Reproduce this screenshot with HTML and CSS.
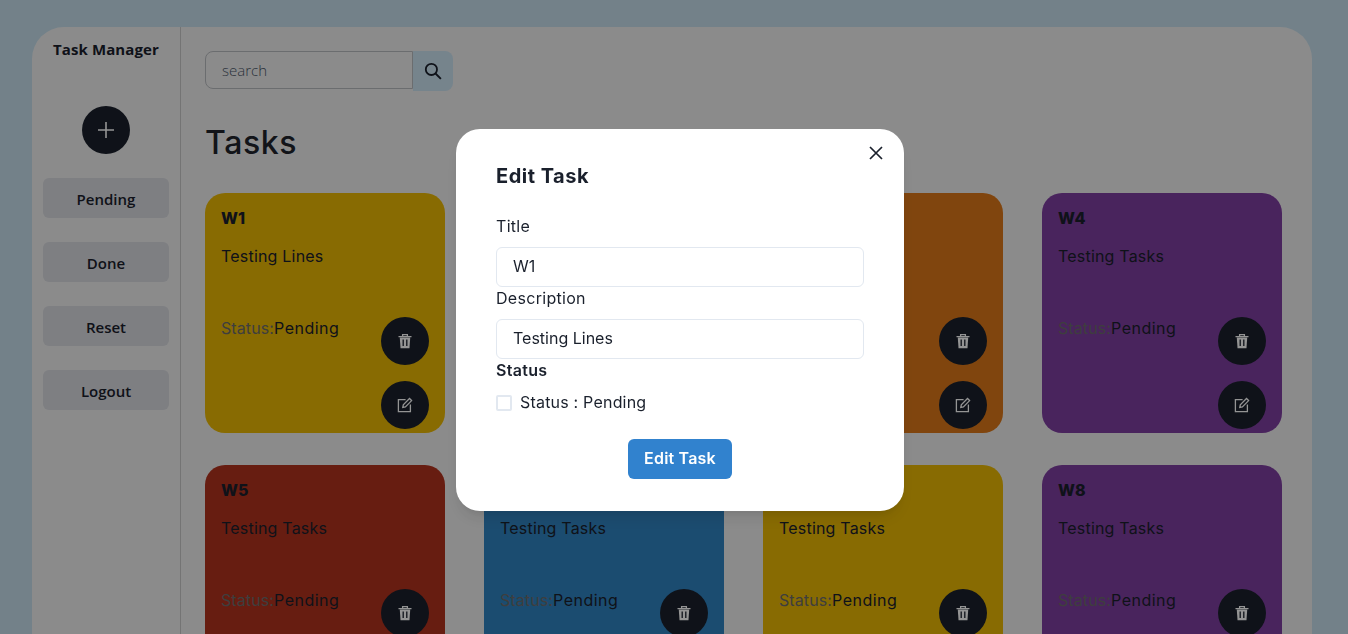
FILE: index.html
```html
<!DOCTYPE html>
<html lang="en">
<head>
    <meta charset="UTF-8">
    <meta name="viewport" content="width=device-width, initial-scale=1.0">
    <title>Task Manager</title>
    <link rel="stylesheet" href="styles.css">
</head>
<body>
    <svg class="sprite" aria-hidden="true">
        <symbol id="trash" viewBox="0 0 16 16">
            <path d="M1.5 3.6h13M5.6 3.4V1.6h4.8v1.8" fill="none" stroke="currentColor" stroke-width="1.3"/>
            <path d="M2.8 4.6h10.4l-.7 10.6H3.5z" fill="currentColor"/>
            <path d="M6.2 6.6v6.4M9.8 6.6v6.4" fill="none" stroke="#1a202c" stroke-width="1.3"/>
        </symbol>
        <symbol id="edit" viewBox="0 0 16 16">
            <path d="M8.6 2.6H1.4v12h12V7.4" fill="none" stroke="currentColor" stroke-width="1.3"/>
            <path d="M5.8 10.4l.5-2.6 6.2-6.3 2.1 2.1-6.2 6.3z" fill="none" stroke="currentColor" stroke-width="1.3"/>
        </symbol>
    </svg>

    <div class="panel">
        <aside class="sidebar">
            <h2 class="brand">Task Manager</h2>
            <button class="add-btn" aria-label="Add task">
                <svg width="18" height="18" viewBox="0 0 18 18"><path d="M9 1v16M1 9h16" stroke="currentColor" stroke-width="1.6"/></svg>
            </button>
            <button class="side-btn">Pending</button>
            <button class="side-btn">Done</button>
            <button class="side-btn">Reset</button>
            <button class="side-btn">Logout</button>
        </aside>

        <main class="content">
            <div class="search">
                <input class="search-input" type="text" placeholder="search">
                <button class="search-btn" aria-label="Search">
                    <svg width="18" height="18" viewBox="0 0 18 18"><circle cx="7.4" cy="7.4" r="5.6" fill="none" stroke="currentColor" stroke-width="1.8"/><path d="M11.5 11.5l5.4 5.4" stroke="currentColor" stroke-width="1.9"/></svg>
                </button>
            </div>

            <h1 class="page-title">Tasks</h1>

            <div class="grid">
                <div class="card yellow">
                    <h3 class="card-title">W1</h3>
                    <p class="card-desc">Testing Lines</p>
                    <div class="card-foot">
                        <p class="card-status"><span class="status-key">Status:</span>Pending</p>
                        <div class="card-actions">
                            <button class="round-btn"><svg width="16" height="16"><use href="#trash"/></svg></button>
                            <button class="round-btn"><svg width="16" height="16"><use href="#edit"/></svg></button>
                        </div>
                    </div>
                </div>
                <div class="card blue">
                    <h3 class="card-title">W2</h3>
                    <p class="card-desc">Testing Tasks</p>
                    <div class="card-foot">
                        <p class="card-status"><span class="status-key">Status:</span>Pending</p>
                        <div class="card-actions">
                            <button class="round-btn"><svg width="16" height="16"><use href="#trash"/></svg></button>
                            <button class="round-btn"><svg width="16" height="16"><use href="#edit"/></svg></button>
                        </div>
                    </div>
                </div>
                <div class="card orange">
                    <h3 class="card-title">W3</h3>
                    <p class="card-desc">Testing Tasks</p>
                    <div class="card-foot">
                        <p class="card-status"><span class="status-key">Status:</span>Pending</p>
                        <div class="card-actions">
                            <button class="round-btn"><svg width="16" height="16"><use href="#trash"/></svg></button>
                            <button class="round-btn"><svg width="16" height="16"><use href="#edit"/></svg></button>
                        </div>
                    </div>
                </div>
                <div class="card purple">
                    <h3 class="card-title">W4</h3>
                    <p class="card-desc">Testing Tasks</p>
                    <div class="card-foot">
                        <p class="card-status"><span class="status-key">Status:</span>Pending</p>
                        <div class="card-actions">
                            <button class="round-btn"><svg width="16" height="16"><use href="#trash"/></svg></button>
                            <button class="round-btn"><svg width="16" height="16"><use href="#edit"/></svg></button>
                        </div>
                    </div>
                </div>
                <div class="card red">
                    <h3 class="card-title">W5</h3>
                    <p class="card-desc">Testing Tasks</p>
                    <div class="card-foot">
                        <p class="card-status"><span class="status-key">Status:</span>Pending</p>
                        <div class="card-actions">
                            <button class="round-btn"><svg width="16" height="16"><use href="#trash"/></svg></button>
                            <button class="round-btn"><svg width="16" height="16"><use href="#edit"/></svg></button>
                        </div>
                    </div>
                </div>
                <div class="card blue">
                    <h3 class="card-title">W6</h3>
                    <p class="card-desc">Testing Tasks</p>
                    <div class="card-foot">
                        <p class="card-status"><span class="status-key">Status:</span>Pending</p>
                        <div class="card-actions">
                            <button class="round-btn"><svg width="16" height="16"><use href="#trash"/></svg></button>
                            <button class="round-btn"><svg width="16" height="16"><use href="#edit"/></svg></button>
                        </div>
                    </div>
                </div>
                <div class="card yellow">
                    <h3 class="card-title">W7</h3>
                    <p class="card-desc">Testing Tasks</p>
                    <div class="card-foot">
                        <p class="card-status"><span class="status-key">Status:</span>Pending</p>
                        <div class="card-actions">
                            <button class="round-btn"><svg width="16" height="16"><use href="#trash"/></svg></button>
                            <button class="round-btn"><svg width="16" height="16"><use href="#edit"/></svg></button>
                        </div>
                    </div>
                </div>
                <div class="card purple">
                    <h3 class="card-title">W8</h3>
                    <p class="card-desc">Testing Tasks</p>
                    <div class="card-foot">
                        <p class="card-status"><span class="status-key">Status:</span>Pending</p>
                        <div class="card-actions">
                            <button class="round-btn"><svg width="16" height="16"><use href="#trash"/></svg></button>
                            <button class="round-btn"><svg width="16" height="16"><use href="#edit"/></svg></button>
                        </div>
                    </div>
                </div>
            </div>
        </main>
    </div>

    <div class="backdrop">
        <form class="modal">
            <button class="close-btn" type="button" aria-label="Close">
                <svg width="14" height="14" viewBox="0 0 14 14"><path d="M1 1l12 12M13 1L1 13" stroke="currentColor" stroke-width="1.7"/></svg>
            </button>
            <h2 class="modal-title">Edit Task</h2>
            <label class="field-label" for="title">Title</label>
            <input class="field-input" id="title" type="text" value="W1">
            <label class="field-label" for="desc">Description</label>
            <input class="field-input" id="desc" type="text" value="Testing Lines">
            <p class="field-label field-strong">Status</p>
            <label class="check-row">
                <input class="check-box" type="checkbox">
                <span class="check-text">Status : Pending</span>
            </label>
            <button class="submit-btn" type="button">Edit Task</button>
        </form>
    </div>
</body>
</html>
```

FILE: styles.css
```css
* {
    box-sizing: border-box;
}
html, body {
    height: 100%;
}
body {
    margin: 0;
    overflow: hidden;
    padding: 27px 36px 0 32px;
    background-color: #c6dfec;
    color: #1a202c;
    font-family: Inter, sans-serif;
}
button {
    border: none;
    font-family: inherit;
    cursor: pointer;
}
h1, h2, h3, p {
    margin: 0;
}
.sprite {
    display: none;
}
.panel {
    display: flex;
    height: 760px;
    background-color: #f0f0f0;
    border-radius: 32px 32px 0 0;
}
.sidebar {
    flex: 0 0 149px;
    display: flex;
    flex-direction: column;
    align-items: center;
    border-right: 1px solid #c8c8c8;
    font-family: "Open Sans", sans-serif;
}
.brand {
    margin-top: 11px;
    font-size: 15px;
    line-height: 22px;
    font-weight: 700;
    color: #1a202c;
    letter-spacing: 0.1px;
}
.add-btn {
    width: 48px;
    height: 48px;
    margin: 46px 0 24px;
    display: flex;
    align-items: center;
    justify-content: center;
    border-radius: 50%;
    background-color: #1a202c;
    color: #ffffff;
}
.side-btn {
    width: 126px;
    height: 40px;
    margin-bottom: 24px;
    padding: 2px 0 0;
    border-radius: 6px;
    background-color: #d9dbe0;
    color: #1a202c;
    font-size: 15px;
    font-weight: 600;
}
.content {
    flex: 1;
    padding: 24px 30px 0 24px;
}
.search {
    display: flex;
    align-items: flex-start;
    width: 248px;
    height: 40px;
}
.search-input {
    flex: 1;
    min-width: 0;
    height: 38px;
    padding: 0 16px;
    border: 1px solid #b9bcc0;
    border-radius: 8px 0 0 8px;
    background: transparent;
    font-family: "Open Sans", sans-serif;
    font-size: 15px;
    font-weight: 300;
}
.search-input::placeholder {
    color: #4a5568;
}
.search-btn {
    flex: 0 0 40px;
    height: 40px;
    display: flex;
    align-items: center;
    justify-content: center;
    border-radius: 0 8px 8px 0;
    background-color: #cce3f2;
    color: #1a202c;
}
.page-title {
    margin-top: 31px;
    font-size: 32px;
    line-height: 42px;
    font-weight: 500;
    letter-spacing: 0.6px;
    color: #20242b;
}
.grid {
    display: grid;
    grid-template-columns: repeat(4, 240px);
    column-gap: 39px;
    row-gap: 32px;
    margin-top: 29px;
}
.card {
    height: 240px;
    padding: 16px;
    border-radius: 20px;
}
.yellow { background-color: #ebb905; }
.blue { background-color: #3083c1; }
.orange { background-color: #dd7819; }
.purple { background-color: #7f3ea1; }
.red { background-color: #b2321e; }
.card-title {
    font-size: 16px;
    line-height: 18px;
    font-weight: 800;
}
.card-desc {
    margin-top: 17px;
    font-size: 16px;
    line-height: 24px;
    letter-spacing: 0.2px;
}
.card-foot {
    display: flex;
    justify-content: space-between;
    margin-top: 49px;
}
.card-status {
    margin-top: -1px;
    font-size: 16px;
    line-height: 24px;
    letter-spacing: 0.5px;
}
.status-key {
    color: #6b6b6b;
    letter-spacing: 0.1px;
}
.card-actions {
    display: flex;
    flex-direction: column;
    gap: 16px;
}
.round-btn {
    width: 48px;
    height: 48px;
    display: flex;
    align-items: center;
    justify-content: center;
    padding: 0;
    border-radius: 50%;
    background-color: #1a202c;
    color: #ffffff;
}
.backdrop {
    position: fixed;
    inset: 0;
    background-color: rgba(0, 0, 0, 0.42);
}
.modal {
    position: absolute;
    top: 129px;
    left: 456px;
    width: 448px;
    height: 382px;
    padding: 32px 40px;
    border-radius: 24px;
    background-color: #ffffff;
    box-shadow: 0 10px 15px -3px rgba(0, 0, 0, 0.1), 0 4px 6px -2px rgba(0, 0, 0, 0.05);
    display: flex;
    flex-direction: column;
}
.close-btn {
    position: absolute;
    top: 17px;
    right: 21px;
    width: 14px;
    height: 14px;
    padding: 0;
    background: none;
    color: #1a202c;
}
.close-btn svg {
    display: block;
}
.modal-title {
    font-size: 20px;
    line-height: 30px;
    font-weight: 700;
    letter-spacing: 0.5px;
    margin-bottom: 23px;
}
.field-label {
    font-size: 16px;
    line-height: 24px;
    font-weight: 400;
    letter-spacing: 0.3px;
    margin-bottom: 9px;
}
.field-input {
    height: 40px;
    padding: 0 16px 2px;
    border: 1px solid #e2e8f0;
    border-radius: 6px;
    color: #1a202c;
    font-family: inherit;
    font-size: 16px;
}
.field-input + .field-label {
    margin-top: -1px;
}
.field-strong {
    font-weight: 600;
}
.check-row {
    display: flex;
    align-items: center;
    gap: 8px;
    height: 24px;
    font-size: 16px;
    line-height: 24px;
}
.check-text {
    margin-top: -2px;
    letter-spacing: 0.2px;
}
.check-box {
    appearance: none;
    width: 16px;
    height: 16px;
    margin: 0;
    border: 2px solid #e2e8f0;
    border-radius: 2px;
}
.submit-btn {
    align-self: center;
    width: 104px;
    height: 40px;
    margin-top: 24px;
    padding: 0 0 2px;
    border-radius: 6px;
    background-color: #3182ce;
    color: #ffffff;
    font-size: 16px;
    font-weight: 600;
    letter-spacing: 0.2px;
}
```
